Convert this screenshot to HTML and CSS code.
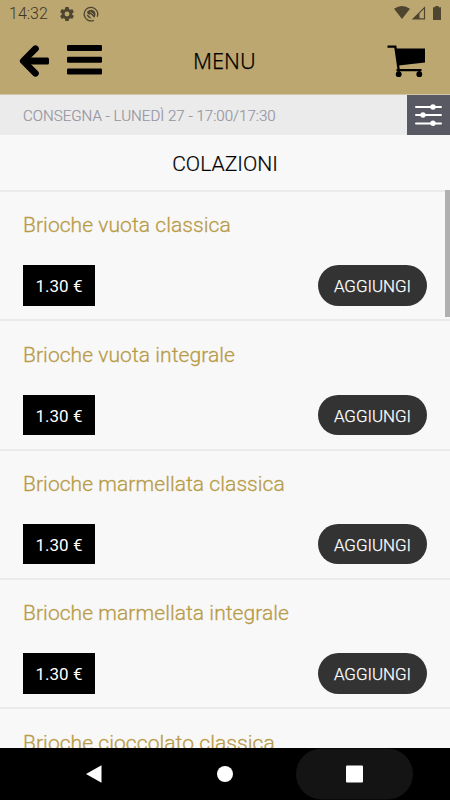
FILE: index.html
```html
<!DOCTYPE html>
<html lang="it">
<head>
<meta charset="utf-8">
<title>Menu</title>
<link rel="stylesheet" href="styles.css">
</head>
<body>
<div class="app">
  <header class="top">
    <div class="status">
      <span class="clock">14:32</span>
      <svg class="gear" width="14" height="14" viewBox="2 2 20 20"><path fill="#4e4530" d="M19.43 12.98c.04-.32.07-.64.07-.98s-.03-.66-.07-.98l2.11-1.65c.19-.15.24-.42.12-.64l-2-3.46c-.12-.22-.39-.3-.61-.22l-2.49 1c-.52-.4-1.08-.73-1.69-.98l-.38-2.65C14.46 2.18 14.25 2 14 2h-4c-.25 0-.46.18-.49.42l-.38 2.65c-.61.25-1.17.59-1.69.98l-2.49-1c-.23-.09-.49 0-.61.22l-2 3.46c-.13.22-.07.49.12.64l2.11 1.65c-.04.32-.07.65-.07.98s.03.66.07.98l-2.11 1.65c-.19.15-.24.42-.12.64l2 3.46c.12.22.39.3.61.22l2.49-1c.52.4 1.08.73 1.69.98l.38 2.65c.03.24.24.42.49.42h4c.25 0 .46-.18.49-.42l.38-2.65c.61-.25 1.17-.59 1.69-.98l2.49 1c.23.09.49 0 .61-.22l2-3.46c.12-.22.07-.49-.12-.64zM12 15.5A3.5 3.5 0 1 1 12 8.500a3.500 3.500 0 0 1 0 7z"/></svg>
      <svg class="badge" width="16" height="16" viewBox="0 0 16 16"><path d="M10.800 14.300A6.800 6.800 0 1 1 14.200 10.800" fill="none" stroke="#4e4530" stroke-width="1.300"/><path d="M3.900 6.400C5.300 3.200 10.200 2.700 12 6.200c1 2 .4 4.200-.9 5.500L7.700 8 6.200 9z" fill="#4e4530"/><path d="M3.700 8c.2 2.700 2.300 4.600 5 4.400L6.300 10z" fill="#4e4530"/><path d="M7 5.600l3.800 3" stroke="#bca771" stroke-width=".7"/></svg>
      <svg class="signals" width="48" height="15" viewBox="0 0 48 15"><path d="M0 2.700Q8-2.700 16 2.700L8 13z" fill="#4e4530"/><path d="M30.500 1.700V12.900H19.300z" fill="none" stroke="#4e4530" stroke-width="1.200"/><path d="M25.500 6.500V13H18.500z" fill="#4e4530"/><path d="M41.300 0h3.200v1.300H47V14h-8V1.300h2.300z" fill="#4e4530"/></svg>
    </div>
    <div class="bar">
      <svg class="back" width="30" height="32" viewBox="0 0 30 32"><path d="M16.500 3.700L4.200 16l12.300 12.300" fill="none" stroke="#000" stroke-width="6.600" stroke-linecap="round" stroke-linejoin="round"/><rect x="5" y="12.500" width="25" height="7" rx="1.500"/></svg>
      <svg class="burger" width="35" height="30" viewBox="0 0 35 30"><rect width="35" height="6" rx="1.300"/><rect y="11.700" width="35" height="6" rx="1.300"/><rect y="23.500" width="35" height="6" rx="1.300"/></svg>
      <h1 class="title">MENU</h1>
      <svg class="cart" width="39" height="33" viewBox="0 0 39 33"><path d="M.5 1.600h7.800l3.500 24M9.500 25.200h25" fill="none" stroke="#000" stroke-width="2.300"/><path d="M8.500 3.500H38v14L11.500 20.500z"/><circle cx="11.700" cy="29.200" r="2.900"/><circle cx="32.300" cy="29.200" r="2.900"/><path d="M11.700 25v3M32.300 25v3" stroke="#000" stroke-width="2"/></svg>
    </div>
  </header>
  <div class="delivery">
    <span class="when">CONSEGNA - LUNEDÌ 27 - 17:00/17:30</span>
    <div class="filter">
      <svg width="27" height="22" viewBox="0 0 27 22"><path d="M1 3h25M1 11h25M1 19.500h25" stroke="#fff" stroke-width="2" stroke-linecap="round"/><circle cx="18" cy="3" r="2.700" fill="#fff"/><circle cx="8" cy="11" r="2.700" fill="#fff"/><circle cx="18" cy="19.300" r="2.700" fill="#fff"/></svg>
    </div>
  </div>
  <h2 class="category">COLAZIONI</h2>
  <main class="list">
    <section class="item"><h3 class="name">Brioche vuota classica</h3><div class="row"><span class="price">1.30 €</span><button class="add">AGGIUNGI</button></div></section>
    <section class="item"><h3 class="name">Brioche vuota integrale</h3><div class="row"><span class="price">1.30 €</span><button class="add">AGGIUNGI</button></div></section>
    <section class="item"><h3 class="name">Brioche marmellata classica</h3><div class="row"><span class="price">1.30 €</span><button class="add">AGGIUNGI</button></div></section>
    <section class="item"><h3 class="name">Brioche marmellata integrale</h3><div class="row"><span class="price">1.30 €</span><button class="add">AGGIUNGI</button></div></section>
    <section class="item"><h3 class="name">Brioche cioccolato classica</h3></section>
    <div class="scroll"></div>
  </main>
  <nav class="nav">
    <svg width="450" height="52" viewBox="0 0 450 52"><rect x="296" y=".5" width="117" height="51" rx="25.500" fill="#141414"/><path d="M86 26L101.500 17.200v17.600z" fill="#fff"/><circle cx="225" cy="26" r="8" fill="#fff"/><rect x="346" y="17.500" width="17" height="17" rx="1" fill="#fff"/></svg>
  </nav>
</div>
</body>
</html>
```
FILE: styles.css
```css
* { box-sizing: border-box; }
body { margin: 0; font-family: Roboto, "Liberation Sans", sans-serif; }
h1, h2, h3 { margin: 0; font-weight: 400; }
svg { display: block; flex: none; }
.app { width: 450px; height: 800px; display: flex; flex-direction: column; background: #f8f8f8; overflow: hidden; }
.top { height: 95px; flex: none; background: #bca771; border-bottom: 1px solid #d0c5a8; }
.status { height: 27px; display: flex; align-items: center; padding-left: 9px; }
.clock { width: 51px; font-size: 16px; font-weight: 300; line-height: 27px; color: #3e3623; }
.badge { margin-left: 9px; }
.signals { margin-left: auto; margin-right: 8px; }
.bar { display: flex; align-items: center; height: 68px; padding: 0 24px 0 19px; }
.burger { margin-left: 18px; margin-top: -3px; }
.title { width: 64px; margin-left: 91px; font: 300 21.8px/30px "Noto Sans", sans-serif; white-space: nowrap; color: #000; -webkit-text-stroke: 0.25px #000; }
.cart { margin-left: auto; }
.delivery { height: 40px; flex: none; display: flex; align-items: center; justify-content: space-between; padding-left: 23px; background: #ebebeb; }
.when { padding-top: 2px; font-size: 15.1px; font-weight: 300; color: #95959f; white-space: nowrap; -webkit-text-stroke: 0.2px #95959f; }
.filter { width: 43px; height: 40px; background: #595963; display: flex; align-items: center; justify-content: center; }
.category { height: 55px; flex: none; line-height: 58px; text-align: center; font-size: 21.1px; font-weight: 300; color: #000; -webkit-text-stroke: 0.2px #000; }
.list { position: relative; flex: 1; min-height: 0; overflow: hidden; }
.item { height: 129.3px; border-top: 2px solid #ebebeb; padding: 20.4px 23px 0; }
.name { height: 26px; line-height: 26px; font-size: 21px; font-weight: 300; color: #b89b48; white-space: nowrap; letter-spacing: 0.07px; -webkit-text-stroke: 0.3px #b89b48; }
.row { display: flex; justify-content: space-between; margin-top: 27px; }
.price { width: 72px; height: 40.3px; background: #000; color: #fff; font-size: 17px; line-height: 42px; text-align: center; }
.add { width: 109px; height: 40.5px; margin: 0; padding: 0; border: 0; border-radius: 21px; background: #333; color: #fff; font: 300 16.9px/42px Roboto, sans-serif; -webkit-text-stroke: 0.25px #fff; }
.scroll { position: absolute; right: 0; top: 0; width: 5px; height: 127px; background: #b0b0b0; }
.nav { height: 52px; flex: none; background: #000; }
```
